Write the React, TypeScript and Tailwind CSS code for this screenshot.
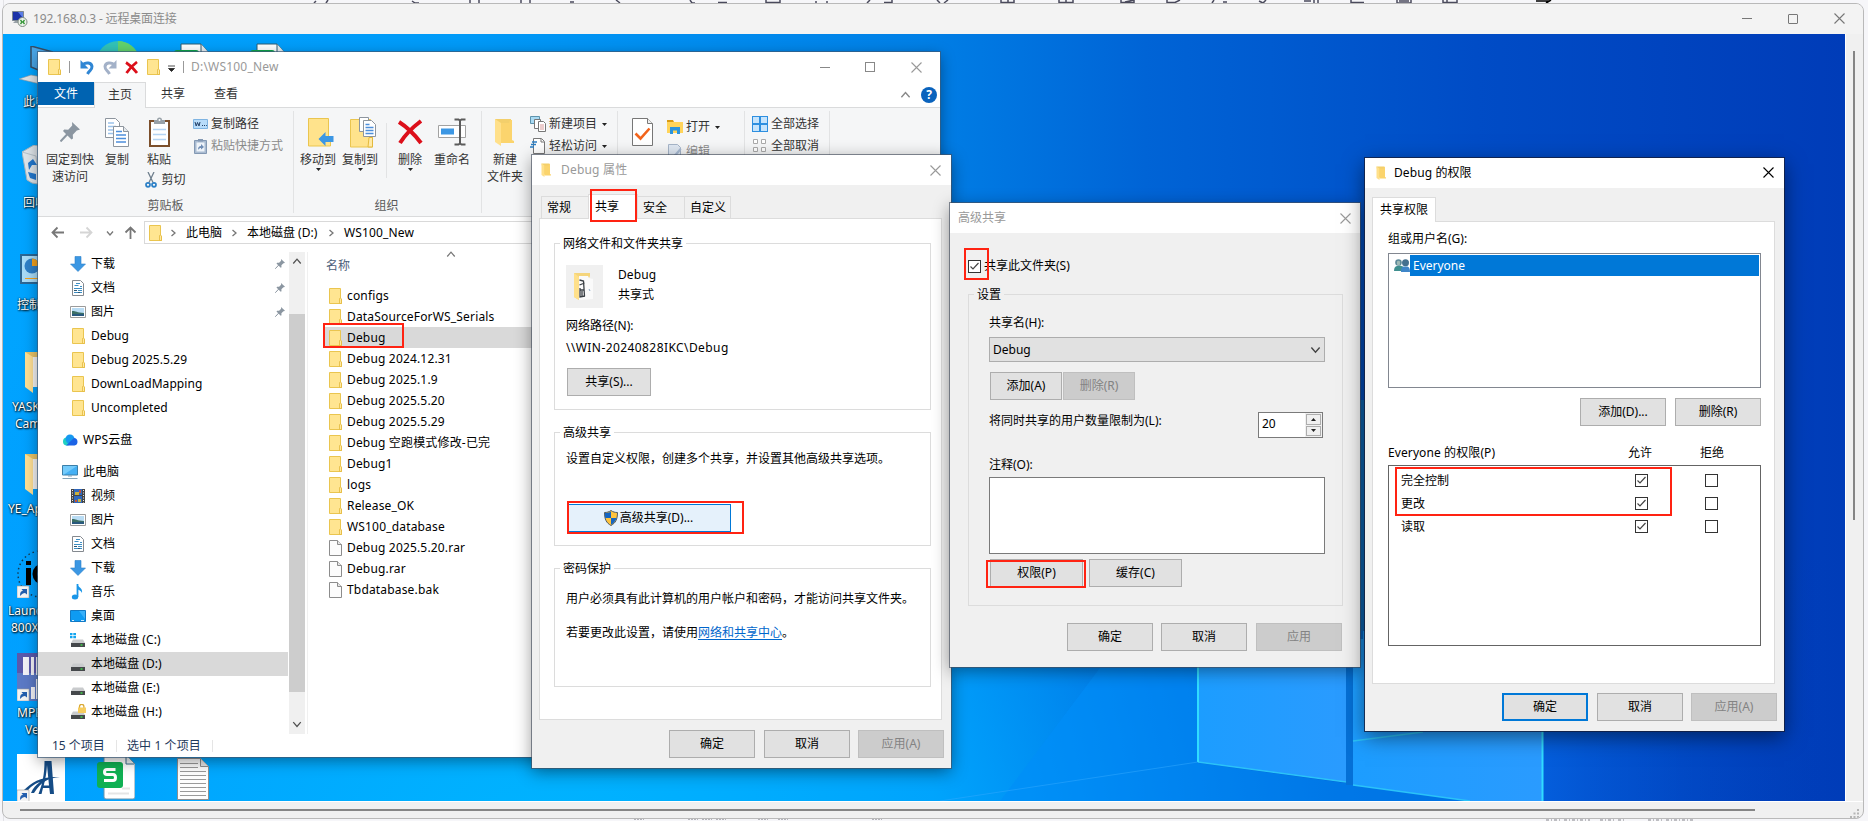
import type { ReactNode } from 'react'

/* ---------- icons ---------- */

function FolderIcon({ w = 13, h = 16 }: { w?: number; h?: number }) {
  return (
    <svg width={w} height={h} viewBox="0 0 13 16" className="shrink-0">
      <path d="M.5.5h11v10l1 1v4H.5z" fill="#ffe591" stroke="#eac54f" />
      <path d="M10.500 15.500v-5l1-.5 1 1v4.500z" fill="#ffe9a2" stroke="#e3b93c" strokeWidth=".8" />
    </svg>
  )
}

function OpenFolderIcon({ w = 11, h = 14 }: { w?: number; h?: number }) {
  return (
    <svg width={w} height={h} viewBox="0 0 20 28" className="shrink-0">
      <path d="M0 1h16v22H4z" fill="#f3cf6b" />
      <path d="M0 1l6 4v23l-6-4z" fill="#ffe08a" />
      <path d="M6 5h8l1-3h2v20l2 1v2H6z" fill="#fbd46d" />
    </svg>
  )
}

function FileIcon() {
  return (
    <svg width="13" height="16" viewBox="0 0 13 16" className="shrink-0">
      <path d="M.5.5h8l4 4v11H.5z" fill="#fcfcfc" stroke="#8c8c8c" />
      <path d="M8.500.5v4h4" fill="#e6e6e6" stroke="#8c8c8c" />
    </svg>
  )
}

function DownloadIcon() {
  return (
    <svg width="16" height="16" viewBox="0 0 16 16">
      <path d="M5 .5h6V8h4.500L8 15.500.5 8H5z" fill="#3b97e3" stroke="#2c80c9" strokeWidth=".6" />
    </svg>
  )
}

function DocIcon() {
  return (
    <svg width="16" height="16" viewBox="0 0 16 16">
      <path d="M2.500.5h8l3 3v12h-11z" fill="#fff" stroke="#84898f" />
      <path d="M6 3.500h4M4.500 5.500h4M10 6.500h2M4 8.500h8M8 10.500h4M4 12.500h8" stroke="#3d8ec4" />
      <path d="M4 10.500h3M8 12.500h2" stroke="#31566f" />
    </svg>
  )
}

function PictureIcon() {
  return (
    <svg width="16" height="16" viewBox="0 0 16 16">
      <path d="M.5 2.500h15v11H.5z" fill="#fff" stroke="#9b9b9b" />
      <path d="M2 4h12v8H2z" fill="#b9dcf4" />
      <path d="M2 7c3-.5 4 1.500 12 2v3H2z" fill="#3c6f66" />
      <path d="M2 10h12v2H2z" fill="#29597e" />
    </svg>
  )
}

function VideoIcon() {
  return (
    <svg width="16" height="16" viewBox="0 0 16 16">
      <path d="M1 1h14v14H1z" fill="#444" />
      <path d="M4 1h8v6H4zM4 8h8v7H4z" fill="#2f68bd" />
      <path d="M5 4h4v3H5zM8 11h3v3H8z" fill="#c9b13d" />
      <path d="M9 2h2v3H9zM5 12h2v2H5z" fill="#c25438" />
      <path d="M2.500 2v13M13.500 2v13" stroke="#eee" strokeDasharray="1 1.500" />
    </svg>
  )
}

function MusicIcon() {
  return (
    <svg width="16" height="16" viewBox="0 0 16 16">
      <path d="M7.500 0v13" stroke="#1a96e8" strokeWidth="1.800" />
      <ellipse cx="5" cy="13" rx="3.200" ry="2.500" fill="#1a96e8" />
      <path d="M7 0c1 3.500 6 3.500 5 9-1-2.500-3-3-5-4z" fill="#1a96e8" />
    </svg>
  )
}

function DesktopIcon() {
  return (
    <svg width="16" height="16" viewBox="0 0 16 16">
      <path d="M.5 2.500h15v11H.5z" fill="#0e9bf3" stroke="#1279c4" />
      <path d="M9 3h6v8z" fill="#37b0fa" />
      <path d="M2 12.500h2M11 12.500h3" stroke="#cfeaff" />
    </svg>
  )
}

function ComputerIcon() {
  return (
    <svg width="16" height="16" viewBox="0 0 16 16">
      <path d="M.5 1.500h15v9.500H.5z" fill="#45b0f4" stroke="#3b7fa9" />
      <path d="M1 2h14L2 10.500H1z" fill="#74cbfb" />
      <path d="M6 12h4M.5 14.500h15" stroke="#84a4b8" />
    </svg>
  )
}

function CloudIcon() {
  return (
    <svg width="16" height="16" viewBox="0 0 16 16">
      <circle cx="5" cy="9.500" r="4" fill="#1fd0c3" />
      <circle cx="8" cy="7" r="4.500" fill="#1698f0" />
      <path d="M4 13.500L12 6a3.800 3.800 0 01.5 7.500z" fill="#1b63e6" />
    </svg>
  )
}

function DriveIcon({ kind }: { kind?: 'system' | 'locked' }) {
  return (
    <svg width="16" height="16" viewBox="0 0 16 16">
      <path d="M3 7.500h10l2 3.500H1z" fill="#c9cbcd" />
      <path d="M1 11h14v4H1z" fill="#45484b" />
      <path d="M10.500 13h2" stroke="#3fe04c" strokeWidth="1.400" />
      {kind === 'system' && (
        <path d="M0 1h2.500v2.200H0zM3.300 1H6v2.200H3.300zM0 4h2.500v2.200H0zM3.300 4H6v2.200H3.300z" fill="#12a5f0" />
      )}
      {kind === 'locked' && (
        <>
          <path d="M9.500 4V2.500a2.200 2.200 0 014.400 0V4" fill="none" stroke="#d9a936" strokeWidth="1.300" />
          <path d="M8 3.500h8V9H8z" fill="#f7cd5e" />
        </>
      )}
    </svg>
  )
}

function PinIcon({ size = 10 }: { size?: number }) {
  return (
    <svg width={size} height={size} viewBox="0 0 20 20" className="shrink-0">
      <path d="M12 0l8 7.500-2.200.8-1 .2-4 4.200.2 3.800-1.500 1L3 9l1.200-1.500 4 .2 4-4.200z" fill="#8b96a1" />
      <path d="M7.500 12L.5 19.500" stroke="#8b96a1" strokeWidth="2" />
    </svg>
  )
}

function RedCross({ size = 13 }: { size?: number }) {
  return (
    <svg width={size} height={size} viewBox="0 0 13 13">
      <path d="M1 1.500C5 4 9 8 12 12M12 1C8 4 4 8 1.500 12" stroke="#dc0f1a" strokeWidth={size > 20 ? 2 : 2.7} fill="none" />
    </svg>
  )
}

function UndoIcon({ flip, color }: { flip?: boolean; color: string }) {
  return (
    <svg width="14" height="15" viewBox="0 0 14 15" className={flip ? '-scale-x-100' : ''}>
      <path d="M3 4.500c3-2.500 8.500-2 9 2 .3 3-2.500 4-4.500 7.500" fill="none" stroke={color} strokeWidth="3" />
      <path d="M.5 0v8.500h8z" fill={color} />
    </svg>
  )
}

function CloseIcon({ color = '#999' }: { color?: string }) {
  return (
    <svg width="11" height="11" viewBox="0 0 11 11">
      <path d="M.5.5l10 10M10.500.5l-10 10" stroke={color} strokeWidth="1.100" />
    </svg>
  )
}

function Caret() {
  return (
    <svg width="5" height="3" viewBox="0 0 5 3" className="shrink-0">
      <path d="M0 0h5L2.500 3z" fill="#222" />
    </svg>
  )
}

function Chevron({ d, w = 8, color = '#777' }: { d: 'up' | 'down' | 'right'; w?: number; color?: string }) {
  const path = { up: 'M1 6l3-3.500L7 6', down: 'M1 2.500L4 6l3-3.500', right: 'M2.500 1L6 4 2.500 7' }[d]
  return (
    <svg width={w} height={w} viewBox="0 0 8 8" className="shrink-0">
      <path d={path} fill="none" stroke={color} strokeWidth={w > 8 ? 1 : 1.3} />
    </svg>
  )
}

function NavArrow({ dir, color }: { dir: 'left' | 'right' | 'up'; color: string }) {
  const d = {
    left: 'M13 6.500H1.500M6.500 1.500l-5 5 5 5',
    right: 'M0 6.500h11.500M6.500 1.500l5 5-5 5',
    up: 'M6.500 13V1.500M1.500 6.500l5-5 5 5',
  }[dir]
  return (
    <svg width="13" height="13" viewBox="0 0 13 13" className="shrink-0">
      <path d={d} fill="none" stroke={color} strokeWidth="1.800" />
    </svg>
  )
}

function CopyIcon() {
  return (
    <svg width="24" height="29" viewBox="0 0 24 29">
      <path d="M.5.500h10l4 4v15H.5z" fill="#fff" stroke="#8d959e" />
      <path d="M3 5h6M3 8.500h8M3 12h8M3 15.500h8" stroke="#9cc2ea" strokeWidth="1.300" />
      <path d="M8.500 8.500h10l5 5v15h-15z" fill="#fff" stroke="#8d959e" />
      <path d="M18.500 8.500v5h5" fill="#e4e8ec" stroke="#8d959e" />
      <path d="M11 13.500h6M11 17h10M11 20.500h10M11 24h10" stroke="#4d8fdb" strokeWidth="1.500" />
    </svg>
  )
}

function PasteIcon() {
  return (
    <svg width="21" height="30" viewBox="0 0 21 30">
      <rect x="1" y="4" width="19" height="25" fill="#fff" stroke="#7c4f2b" strokeWidth="2" />
      <path d="M4 12.500h13M4 17.500h13M4 22.500h13" stroke="#b4d4f3" strokeWidth="1.500" />
      <path d="M5 3h3a2.500 2.500 0 015 0h3v4H5z" fill="#98a1a8" />
      <circle cx="10.500" cy="3" r="1" fill="#fff" />
    </svg>
  )
}

function ScissorsIcon() {
  return (
    <svg width="12" height="16" viewBox="0 0 12 16">
      <path d="M3 0l5 10.500M9 0L4 10.500" stroke="#6f7f8d" strokeWidth="1.300" />
      <circle cx="3" cy="12.800" r="2" fill="none" stroke="#2b7fc6" strokeWidth="1.700" />
      <circle cx="9" cy="12.800" r="2" fill="none" stroke="#2b7fc6" strokeWidth="1.700" />
    </svg>
  )
}

function PathIcon() {
  return (
    <svg width="15" height="10" viewBox="0 0 15 10">
      <path d="M.5.5h14v9H.5z" fill="#b8dcfa" stroke="#7fb4e2" />
      <path d="M2 3l1.200 4L4.500 3.500 6 7l1-4M9 6.500h1M11 6.500h1M13 6.500h.8" stroke="#223f66" fill="none" />
    </svg>
  )
}

function ShortcutIcon() {
  return (
    <svg width="13" height="15" viewBox="0 0 13 15">
      <path d="M.5 1.500h12v13H.5z" fill="#a9bbd1" stroke="#8398b3" />
      <path d="M2.500 3.500h8v9h-8z" fill="#eef3f9" />
      <path d="M4 11c0-3 1-4 3-4V5l3 3-3 2.500V9C6 9 5 9.500 4 11z" fill="#6f8db5" />
      <path d="M4 0h5v2.500H4z" fill="#8398b3" />
    </svg>
  )
}

function MoveToIcon() {
  return (
    <svg width="27" height="30" viewBox="0 0 27 30" className="translate-x-[3px]">
      <path d="M.5 1.500h20V23h2v6H.5z" fill="#ffe38c" stroke="#eac54f" />
      <path d="M10.500 22l7-7v4h8v6h-8v4z" fill="#3c97e4" />
    </svg>
  )
}

function CopyToIcon() {
  return (
    <svg width="27" height="31" viewBox="0 0 27 31" className="translate-x-[3px]">
      <path d="M.5 2.500h20V20h2v10H.5z" fill="#ffe38c" stroke="#eac54f" />
      <path d="M19 20.500h3.500V30H18z" fill="#ffeaa8" stroke="#e3b93c" />
      <path d="M9.500.5h9v14h-9z" fill="#fff" stroke="#8d959e" />
      <path d="M13.500 3.500h8l4 4v12h-12z" fill="#fff" stroke="#8d959e" />
      <path d="M15.500 7.500h4M15.500 10.500h8M15.500 13.500h8M15.500 16.500h8" stroke="#4d8fdb" strokeWidth="1.300" />
    </svg>
  )
}

function RenameIcon() {
  return (
    <svg width="28" height="28" viewBox="0 0 28 28">
      <path d="M.5 7.500h27v12H.5z" fill="#fff" stroke="#a2a2a2" />
      <path d="M3 10.500h13v6H3z" fill="#3c97e4" />
      <path d="M16.500 1.500h4l1.500 1 1.500-1h4M22 2v24M16.500 26.500h4l1.500-1 1.500 1h4" fill="none" stroke="#5b5b5b" strokeWidth="2" />
    </svg>
  )
}

function NewItemIcon() {
  return (
    <svg width="16" height="16" viewBox="0 0 16 16">
      <path d="M.5.500h9v7h-9z" fill="#a9daf3" stroke="#5d93ad" />
      <path d="M4.500 3.500h6v9h-6z" fill="#fff" stroke="#777" />
      <path d="M8.500 5.500h5l2 2v8h-7z" fill="#fff" stroke="#777" />
      <path d="M10 9h4M10 11h4M10 13h4" stroke="#d99a9a" />
    </svg>
  )
}

function EasyAccessIcon() {
  return (
    <svg width="16" height="16" viewBox="0 0 16 16">
      <path d="M3.500.5h8l3 3v12h-11z" fill="#fff" stroke="#777" />
      <path d="M11 1v3h3" fill="none" stroke="#777" />
      <path d="M2 4h5M1 6.500h5M0 9h4" stroke="#2b7fc6" strokeWidth="1.300" />
    </svg>
  )
}

function PropertiesIcon() {
  return (
    <svg width="21" height="28" viewBox="0 0 21 28">
      <path d="M.5.500h15l5 5v22H.5z" fill="#fff" stroke="#777" />
      <path d="M15.500.5v5h5" fill="#eee" stroke="#777" />
      <path d="M3.500 15.500l5 5 9-10" fill="none" stroke="#f2641c" strokeWidth="2.600" />
    </svg>
  )
}

function OpenIcon() {
  return (
    <svg width="16" height="14" viewBox="0 0 16 14">
      <path d="M0 0h6l1 2h-7z" fill="#d99a12" />
      <path d="M0 2h16v11H0z" fill="#ffd45a" />
      <path d="M3 14V7h10v7h-3v-3.500H6V14z" fill="#2a93dd" />
    </svg>
  )
}

function EditIcon() {
  return (
    <svg width="14" height="16" viewBox="0 0 14 16">
      <path d="M.5.5h9l3 3v12H.5z" fill="#dfe8f3" stroke="#a6b5c9" />
      <path d="M5 12L12 4l1.500 1.500-6.500 8z" fill="#a9bbd4" />
    </svg>
  )
}

function SelectIcon({ filled }: { filled?: boolean }) {
  if (filled) {
    return (
      <svg width="16" height="16" viewBox="0 0 16 16">
        <path d="M0 0h16v16H0z" fill="#2d8fe0" />
        <path d="M1 1h6v6H1zM9 1h6v6H9zM1 9h6v6H1zM9 9h6v6H9z" fill="#c6e4fc" />
      </svg>
    )
  }
  return (
    <svg width="16" height="16" viewBox="0 0 16 16">
      <path d="M1.500 1.500h4v4h-4zM9.500 1.500h4v4h-4zM1.500 9.500h4v4h-4zM9.500 9.500h4v4h-4z" fill="#fff" stroke="#aaa" />
    </svg>
  )
}

function ShieldIcon() {
  return (
    <svg width="14" height="16" viewBox="0 0 14 16" className="shrink-0">
      <path d="M7 .5c2 1.500 4 2 6.500 2 0 7-2 10.500-6.500 13C2.500 13 .5 9.500.5 2.500 3 2.500 5 2 7 .5z" fill="#ffc33c" stroke="#4c5a66" />
      <path d="M7 1.500V8H1.200C1 6.500 1 5 1 3c2.500 0 4-.5 6-1.500zM7 8h5.500c-.8 3-2.500 5-5.500 6.800z" fill="#1464c0" />
    </svg>
  )
}

function UsersIcon() {
  return (
    <svg width="16" height="15" viewBox="0 0 16 15" className="shrink-0">
      <path d="M0 13c0-3 1-4.500 3-5l3-.5 3 1V13z" fill="#3f8f8f" />
      <circle cx="4.500" cy="4.500" r="3.300" fill="#5f8a99" />
      <path d="M7 14c0-3 .5-5 2.500-5.500h4C15.500 9.500 16 11 16 14z" fill="#3f86c9" />
      <circle cx="11.500" cy="4.800" r="3.500" fill="#44708f" />
      <path d="M3 3.500c1-1 2-1 3 0v3c-1 1-2 1-3 0z" fill="#9fb9b5" />
    </svg>
  )
}

/* ---------- shared controls ---------- */

type ButtonProps = { children: ReactNode; disabled?: boolean; className?: string }

function Button({ children, disabled, className = 'w-[86px]' }: ButtonProps) {
  const tone = disabled
    ? 'border-[#bfbfbf] bg-[#cccccc] text-[#838383]'
    : 'border-[#adadad] bg-[#e1e1e1] text-black'
  return (
    <button className={`flex h-7 shrink-0 items-center justify-center border ${tone} ${className}`}>
      {children}
    </button>
  )
}

function Checkbox({ checked }: { checked?: boolean }) {
  return (
    <span className="flex h-[13px] w-[13px] shrink-0 items-center justify-center border border-[#333] bg-white">
      {checked && (
        <svg width="11" height="11" viewBox="0 0 11 11">
          <path d="M1.500 5.500L4 8l5.500-6" fill="none" stroke="#444" strokeWidth="1.200" />
        </svg>
      )}
    </span>
  )
}

function Mark({ className }: { className: string }) {
  return <div className={`absolute z-20 border-2 border-[#ff2312] ${className}`} />
}

function RibbonGroup({ label, children, className }: { label?: string; children: ReactNode; className: string }) {
  return (
    <div className={`flex shrink-0 flex-col border-r border-[#e2e3e4] ${className}`}>
      <div className="flex">{children}</div>
      <div className="mt-auto -mb-px -ml-[5px] text-center text-[#5a5a5a]">{label}</div>
    </div>
  )
}

type BigButtonProps = { icon: ReactNode; label: string[]; caret?: boolean; className: string; children?: ReactNode }

function BigButton({ icon, label, caret, className, children }: BigButtonProps) {
  return (
    <div className={`flex flex-col items-center pt-1.5 whitespace-nowrap ${className}`}>
      <div className="flex h-[30px] items-center">{icon}</div>
      <div className="mt-1 text-center leading-[17px]">
        {label.map(l => (
          <div key={l}>{l}</div>
        ))}
      </div>
      {caret && <Caret />}
      {children}
    </div>
  )
}

function SmallButton({ icon, label, caret, muted }: { icon: ReactNode; label: string; caret?: boolean; muted?: boolean }) {
  return (
    <div className={`flex h-4 items-center gap-[3px] whitespace-nowrap ${muted ? 'text-[#8a8a8a]' : ''}`}>
      <span className="flex w-4 justify-center">{icon}</span>
      {label}
      {caret && (
        <span className="ml-0.5">
          <Caret />
        </span>
      )}
    </div>
  )
}

/* ---------- explorer ---------- */

const quickAccess = [
  { icon: <DownloadIcon />, name: '下载', pinned: true },
  { icon: <DocIcon />, name: '文档', pinned: true },
  { icon: <PictureIcon />, name: '图片', pinned: true },
  { icon: <FolderIcon />, name: 'Debug' },
  { icon: <FolderIcon />, name: 'Debug 2025.5.29' },
  { icon: <FolderIcon />, name: 'DownLoadMapping' },
  { icon: <FolderIcon />, name: 'Uncompleted' },
]

const thisPc = [
  { icon: <VideoIcon />, name: '视频' },
  { icon: <PictureIcon />, name: '图片' },
  { icon: <DocIcon />, name: '文档' },
  { icon: <DownloadIcon />, name: '下载' },
  { icon: <MusicIcon />, name: '音乐' },
  { icon: <DesktopIcon />, name: '桌面' },
  { icon: <DriveIcon kind="system" />, name: '本地磁盘 (C:)' },
  { icon: <DriveIcon />, name: '本地磁盘 (D:)', selected: true },
  { icon: <DriveIcon />, name: '本地磁盘 (E:)' },
  { icon: <DriveIcon kind="locked" />, name: '本地磁盘 (H:)' },
]

const files = [
  'configs',
  'DataSourceForWS_Serials',
  'Debug',
  'Debug 2024.12.31',
  'Debug 2025.1.9',
  'Debug 2025.5.20',
  'Debug 2025.5.29',
  'Debug 空跑模式修改-已完',
  'Debug1',
  'logs',
  'Release_OK',
  'WS100_database',
  'Debug 2025.5.20.rar',
  'Debug.rar',
  'Tbdatabase.bak',
]

type NavRowProps = { icon: ReactNode; name: string; pinned?: boolean; selected?: boolean; root?: boolean }

function NavRow({ icon, name, pinned, selected, root }: NavRowProps) {
  return (
    <div className={`flex h-6 items-center pr-[3px] ${root ? 'pl-6' : 'pl-8'} ${selected ? 'bg-[#d9d9d9]' : ''}`}>
      <span className="flex w-4 justify-center">{icon}</span>
      <span className="ml-[5px] flex-1 tracking-[0.05px]">{name}</span>
      {pinned && <PinIcon />}
    </div>
  )
}

function Explorer() {
  return (
    <div className="absolute top-[18px] left-[35px] flex h-[705px] w-[902px] flex-col bg-white shadow-[0_0_0_1px_rgba(60,90,120,0.7),0_4px_14px_rgba(0,0,0,0.4)]">
      <div className="flex h-[30px] items-center pl-[10px] text-[#999]">
        <FolderIcon />
        <span className="ml-2 h-3 w-px bg-[#999]" />
        <span className="ml-2.5"><UndoIcon color="#2f86d4" /></span>
        <span className="ml-[9px]"><UndoIcon flip color="#a3b1c8" /></span>
        <span className="ml-2"><RedCross /></span>
        <span className="ml-[9px]"><FolderIcon /></span>
        <svg width="7" height="7" viewBox="0 0 7 7" className="ml-2 mt-0.5">
          <path d="M0 1h7M.5 3.500h6l-3 3z" stroke="#222" strokeWidth=".8" fill="#222" />
        </svg>
        <span className="ml-2 h-3 w-px bg-[#999]" />
        <span className="ml-[7px] tracking-[0.2px]">D:\WS100_New</span>
        <span className="ml-auto h-px w-2.5 bg-[#888]" />
        <span className="ml-[35px] h-2.5 w-2.5 border border-[#888]" />
        <span className="mr-[18px] ml-9"><CloseIcon /></span>
      </div>

      <div className="flex h-[26px] border-b border-[#dadbdc] text-[#333]">
        <div className="flex h-[23px] w-14 items-center justify-center bg-[#0063b1] text-white">文件</div>
        <div className="-mb-px flex w-[52px] items-center justify-center border border-b-0 border-[#dadbdc] bg-[#f5f6f7] pb-0.5">主页</div>
        <div className="ml-[15px] leading-6">共享</div>
        <div className="ml-[29px] leading-6">查看</div>
        <div className="mr-[3px] ml-auto flex items-center gap-2.5">
          <Chevron d="up" w={11} color="#888" />
          <span className="flex h-4 w-4 items-center justify-center rounded-full bg-[#0a63bd] text-xs font-bold text-white">?</span>
        </div>
      </div>

      <div className="flex h-[109px] border-b border-[#dadbdc] bg-[#f5f6f7] py-[3px] text-[#333]">
        <RibbonGroup label="剪贴板" className="w-64 pl-[5px]">
          <BigButton className="w-[54px]" icon={<PinIcon size={20} />} label={['固定到快', '速访问']} />
          <BigButton className="w-10" icon={<CopyIcon />} label={['复制']} />
          <BigButton className="w-[44px]" icon={<PasteIcon />} label={['粘贴']}>
            <div className="mt-[3px] ml-3 flex h-[17px] items-center gap-[5px]">
              <ScissorsIcon />
              剪切
            </div>
          </BigButton>
          <div className="ml-[11px] flex flex-col gap-1.5 pt-[5px]">
            <SmallButton icon={<PathIcon />} label="复制路径" />
            <SmallButton icon={<ShortcutIcon />} label="粘贴快捷方式" muted />
          </div>
        </RibbonGroup>
        <RibbonGroup label="组织" className="w-[188px] pl-[3px]">
          <BigButton className="w-[42px]" icon={<MoveToIcon />} label={['移动到']} caret />
          <BigButton className="w-[42px]" icon={<CopyToIcon />} label={['复制到']} caret />
          <div className="mt-3 ml-[5px] h-[55px] w-px bg-[#e2e3e4]" />
          <BigButton className="w-[46px]" icon={<RedCross size={26} />} label={['删除']} caret />
          <BigButton className="w-[38px]" icon={<RenameIcon />} label={['重命名']} />
        </RibbonGroup>
        <RibbonGroup className="w-[136px]">
          <BigButton className="w-[46px]" icon={<OpenFolderIcon w={20} h={28} />} label={['新建', '文件夹']} />
          <div className="ml-0.5 flex flex-col gap-1.5 pt-[5px]">
            <SmallButton icon={<NewItemIcon />} label="新建项目" caret />
            <SmallButton icon={<EasyAccessIcon />} label="轻松访问" caret />
          </div>
        </RibbonGroup>
        <RibbonGroup className="w-[127px]">
          <div className="flex w-[49px] justify-center pt-[7px]"><PropertiesIcon /></div>
          <div className="flex flex-col gap-[9px] pt-2">
            <SmallButton icon={<OpenIcon />} label="打开" caret />
            <SmallButton icon={<EditIcon />} label="编辑" muted />
          </div>
        </RibbonGroup>
        <RibbonGroup className="w-[85px] pl-[7px]">
          <div className="flex flex-col gap-1.5 pt-[5px]">
            <SmallButton icon={<SelectIcon filled />} label="全部选择" />
            <SmallButton icon={<SelectIcon />} label="全部取消" />
          </div>
        </RibbonGroup>
      </div>

      <div className="flex h-[35px] items-start pt-1">
        <div className="flex h-[23px] w-[106px] items-center pl-[13px]">
          <NavArrow dir="left" color="#777" />
          <span className="ml-4"><NavArrow dir="right" color="#d5d5d5" /></span>
          <span className="ml-[13px]"><Chevron d="down" /></span>
          <span className="ml-2.5"><NavArrow dir="up" color="#777" /></span>
        </div>
        <div className="flex h-[23px] flex-1 items-center border border-[#d9d9d9] pl-1 whitespace-nowrap">
          <FolderIcon />
          <span className="ml-[7px]"><Chevron d="right" /></span>
          <span className="ml-[9px] w-[36px]">此电脑</span>
          <span className="ml-2"><Chevron d="right" /></span>
          <span className="ml-[9px] w-[72px]">本地磁盘 (D:)</span>
          <span className="ml-2"><Chevron d="right" /></span>
          <span className="ml-[9px] tracking-[0.15px]">WS100_New</span>
        </div>
      </div>

      <div className="flex h-[482px]">
        <div className="w-[250px]">
          {quickAccess.map(item => (
            <NavRow key={item.name} {...item} />
          ))}
          <div className="my-2"><NavRow root icon={<CloudIcon />} name="WPS云盘" /></div>
          <NavRow root icon={<ComputerIcon />} name="此电脑" />
          {thisPc.map(item => (
            <NavRow key={item.name} {...item} />
          ))}
        </div>
        <div className="ml-px flex w-4 flex-col items-center bg-[#f0f0f0]">
          <div className="flex h-[62px] items-start pt-1"><Chevron d="up" w={10} color="#505050" /></div>
          <div className="h-[378px] w-4 bg-[#cdcdcd]" />
          <div className="mt-auto flex h-[15px] items-start"><Chevron d="down" w={10} color="#505050" /></div>
        </div>
        <div className="relative ml-0.5 flex-1 border-l border-[#f0f0f0]">
          <span className="absolute top-[-3px] left-[138px]"><Chevron d="up" w={10} /></span>
          <div className="h-[33px] pl-[18px] leading-[27px] text-[#4c607a]">名称</div>
          {files.map((name, i) => (
            <div
              key={name}
              className={`ml-4 flex h-[21px] items-center gap-[5px] pl-[5px] tracking-[0.17px] ${name === 'Debug' ? 'bg-[#d9d9d9]' : ''}`}
            >
              {i < 12 ? <FolderIcon /> : <FileIcon />}
              {name}
            </div>
          ))}
          <Mark className="top-[71px] left-[15px] h-[25px] w-[81px]" />
        </div>
      </div>

      <div className="flex h-[23px] items-center pl-3.5 text-[#1e395b]">
        <span className="w-[64px]">15 个项目</span>
        <span className="h-3 w-px bg-[#e5e5e5]" />
        <span className="ml-2.5 w-[85px] tracking-[0.1px]">选中 1 个项目</span>
        <span className="h-3 w-px bg-[#e5e5e5]" />
      </div>
    </div>
  )
}

/* ---------- dialogs ---------- */

const dialogShadow = 'shadow-[0_0_0_1px_rgba(70,80,95,0.65),0_4px_16px_rgba(0,0,0,0.42)]'

type GroupProps = { title: string; children: ReactNode; className: string; legend?: string }

function Group({ title, children, className, legend = '-ml-[6px]' }: GroupProps) {
  return (
    <fieldset className={`min-w-0 border border-[#dcdcdc] ${className}`}>
      <legend className={`px-[3px] leading-4 ${legend}`}>
        <span className="block translate-y-px">{title}</span>
      </legend>
      {children}
    </fieldset>
  )
}

function PropertiesDialog() {
  return (
    <div className={`absolute top-[121px] left-[529px] flex h-[613px] w-[419px] flex-col bg-[#f0f0f0] ${dialogShadow}`}>
      <div className="flex h-[30px] items-center bg-white pr-2.5 pl-[9px] text-[#999]">
        <OpenFolderIcon />
        <span className="ml-[9px] tracking-[0.2px]">Debug 属性</span>
        <span className="ml-auto"><CloseIcon /></span>
      </div>
      <div className="flex h-[33px] items-end pl-[9px]">
        <div className="flex h-[22px] w-[47px] items-center border border-r-0 border-b-0 border-[#dcdcdc] pl-[5px]">常规</div>
        <div className="z-10 -mb-px flex h-[25px] w-[50px] items-center border border-b-0 border-[#dcdcdc] bg-white pb-px pl-1.5">共享</div>
        <div className="flex h-[22px] w-[46px] items-center border border-x-0 border-b-0 border-[#dcdcdc] pl-[5px]">安全</div>
        <div className="flex h-[22px] w-[47px] items-center border border-b-0 border-[#dcdcdc] pl-[5px]">自定义</div>
      </div>
      <div className="ml-[7px] h-[502px] w-[403px] border border-[#dcdcdc] bg-white pt-4 pr-[10px] pl-3.5">
        <Group title="网络文件和文件夹共享" className="h-[175px] px-[11px] pt-3.5">
          <div className="flex">
            <div className="flex h-[43px] w-[37px] items-center justify-center bg-[#f0f0f0]">
              <svg width="23" height="29" viewBox="0 0 23 29">
                <path d="M1 1h16v3L6 28l-5-3z" fill="#f5d57c" />
                <path d="M6 4h9l1 2 4 1v20l-14 1z" fill="#fafafa" />
                <path d="M1 1l5 4v23l-5-3z" fill="#ffe08a" />
                <path d="M6.500 8l4 1 1 15M6.500 13l5-2M7 18h4M7 16v9l5-1M9 19v5" stroke="#3a3f44" strokeWidth="1.300" fill="none" />
                <path d="M16 17l1 2" stroke="#8aa9c4" />
              </svg>
            </div>
            <div className="ml-[15px] leading-5">
              <div className="tracking-[0.1px]">Debug</div>
              <div>共享式</div>
            </div>
          </div>
          <div className="mt-[9px] leading-[18px]">网络路径(N):</div>
          <div className="mt-1 leading-[18px] tracking-[0.42px]">\\WIN-20240828IKC\Debug</div>
          <Button className="mt-[11px] ml-px w-[84px]">共享(S)...</Button>
        </Group>
        <Group title="高级共享" className="mt-3.5 h-[122px] px-[11px] pt-2.5">
          <div className="leading-[18px]">设置自定义权限，创建多个共享，并设置其他高级共享选项。</div>
          <button className="mt-9 ml-0.5 flex h-7 w-[163px] items-center justify-center gap-0.5 border border-[#0078d7] bg-[#e5f1fb] pr-0.5">
            <ShieldIcon />
            高级共享(D)...
          </button>
        </Group>
        <Group title="密码保护" className="mt-3.5 h-[127px] px-[11px] pt-3.5">
          <div className="leading-[18px]">用户必须具有此计算机的用户帐户和密码，才能访问共享文件夹。</div>
          <div className="mt-4 leading-[18px]">
            若要更改此设置，请使用<a className="text-[#0066cc] underline underline-offset-2">网络和共享中心</a>。
          </div>
        </Group>
      </div>
      <div className="mt-2.5 flex justify-end pr-[7px]">
        <Button>确定</Button>
        <Button className="ml-[9px] w-[86px]">取消</Button>
        <Button disabled className="ml-2 w-[86px]">应用(A)</Button>
      </div>
      <Mark className="top-[34px] left-[58px] h-[33px] w-[47px]" />
      <Mark className="top-[346px] left-[35px] h-[33px] w-[177px]" />
    </div>
  )
}

function AdvancedDialog() {
  return (
    <div className={`absolute top-[169px] left-[947px] flex h-[464px] w-[410px] flex-col bg-[#f0f0f0] ${dialogShadow}`}>
      <div className="flex h-[30px] items-center bg-white pr-[9px] pl-2 text-[#999]">
        高级共享
        <span className="ml-auto"><CloseIcon /></span>
      </div>
      <div className="mt-6 ml-[18px] flex h-[18px] items-center gap-[3px]">
        <Checkbox checked />
        共享此文件夹(S)
      </div>
      <Group title="设置" legend="-ml-[15px]" className="mt-[11px] ml-[18px] h-[320px] w-[375px] px-5 pt-3">
        <div className="leading-[18px]">共享名(H):</div>
        <div className="mt-[5px] flex h-[25px] w-[336px] items-center justify-between border border-[#adadad] bg-[#e1e1e1] px-[3px]">
          Debug
          <Chevron d="down" w={11} color="#444" />
        </div>
        <div className="mt-2.5 ml-px flex gap-px">
          <Button className="w-[72px]">添加(A)</Button>
          <Button disabled className="w-[72px]">删除(R)</Button>
        </div>
        <div className="mt-3 flex h-[26px] w-[334px] justify-between">
          <span className="leading-[18px]">将同时共享的用户数量限制为(L):</span>
          <div className="flex w-[65px] border border-[#7a7a7a] bg-white pl-[3px]">
            <span className="leading-[22px]">20</span>
            <div className="ml-auto flex w-[17px] flex-col gap-px bg-[#f0f0f0] p-px">
              <span className="flex flex-1 items-center justify-center border border-[#adadad]">
                <span className="rotate-180"><Caret /></span>
              </span>
              <span className="flex flex-1 items-center justify-center border border-[#adadad]"><Caret /></span>
            </div>
          </div>
        </div>
        <div className="mt-[18px] leading-[18px]">注释(O):</div>
        <div className="mt-[3px] h-[77px] w-[336px] border border-[#7a7a7a] bg-white" />
        <div className="mt-[5px] ml-px flex gap-1.5">
          <Button className="w-[93px]">权限(P)</Button>
          <Button className="w-[93px]">缓存(C)</Button>
        </div>
      </Group>
      <div className="mt-[17px] flex justify-end pr-[18px]">
        <Button>确定</Button>
        <Button className="ml-2 w-[86px]">取消</Button>
        <Button disabled className="ml-[9px] w-[86px]">应用</Button>
      </div>
      <Mark className="top-[45px] left-[14px] h-8 w-[25px]" />
      <Mark className="top-[357px] left-[36px] h-7 w-[100px]" />
    </div>
  )
}

const permissions = ['完全控制', '更改', '读取']

function PermissionsDialog() {
  return (
    <div className="absolute top-[124px] left-[1362px] flex h-[573px] w-[419px] flex-col bg-[#f0f0f0] shadow-[0_0_0_1px_rgba(20,30,60,0.8),0_6px_20px_rgba(0,0,0,0.5)]">
      <div className="flex h-[30px] items-center bg-white pr-2.5 pl-[11px]">
        <OpenFolderIcon />
        <span className="ml-[7px] tracking-[0.1px]">Debug 的权限</span>
        <span className="-mt-0.5 ml-auto"><CloseIcon color="#000" /></span>
      </div>
      <div className="z-10 mt-[9px] -mb-px ml-[7px] flex h-[25px] w-16 items-center justify-center border border-b-0 border-[#dcdcdc] bg-white">
        共享权限
      </div>
      <div className="ml-[7px] h-[463px] w-[403px] border border-[#dcdcdc] bg-white pt-2 pl-[15px]">
        <div className="leading-[18px]">组或用户名(G):</div>
        <div className="mt-[5px] h-[135px] w-[373px] border border-[#828790] p-px">
          <div className="flex items-center pl-1">
            <UsersIcon />
            <span className="h-[21px] flex-1 bg-[#0078d7] pl-[3px] leading-[21px] text-white">Everyone</span>
          </div>
        </div>
        <div className="mt-2.5 flex w-[373px] justify-end gap-[9px]">
          <Button>添加(D)...</Button>
          <Button>删除(R)</Button>
        </div>
        <div className="mt-[18px] flex leading-[18px]">
          <span className="w-60 tracking-[0.1px]">Everyone 的权限(P)</span>
          <span className="w-[72px]">允许</span>
          <span>拒绝</span>
        </div>
        <div className="mt-[3px] h-[181px] w-[373px] border border-[#646464] pt-[3px]">
          {permissions.map(name => (
            <div key={name} className="flex h-[23px] items-center pl-3">
              <span className="w-[234px]">{name}</span>
              <span className="w-[70px]"><Checkbox checked /></span>
              <Checkbox />
            </div>
          ))}
        </div>
      </div>
      <div className="mt-[9px] flex justify-end pr-[7px]">
        <button className="h-7 w-[86px] border-2 border-[#0078d7] bg-[#e1e1e1]">确定</button>
        <Button className="ml-[9px] w-[86px]">取消</Button>
        <Button disabled className="ml-2 w-[86px]">应用(A)</Button>
      </div>
      <Mark className="top-[309px] left-[30px] h-[49px] w-[277px]" />
    </div>
  )
}

/* ---------- desktop ---------- */

function Wallpaper() {
  return (
    <svg width="1842" height="767" viewBox="3 34 1842 767" className="absolute inset-0">
      <defs>
        <linearGradient id="base" x1="0" y1="0" x2="1" y2="0">
          <stop offset="0" stopColor="#00a4ff" />
          <stop offset=".25" stopColor="#009af8" />
          <stop offset=".5" stopColor="#007fe6" />
          <stop offset=".62" stopColor="#0064d6" />
          <stop offset=".8" stopColor="#004cc6" />
          <stop offset="1" stopColor="#003cb8" />
        </linearGradient>
        <radialGradient id="glow" cx="560" cy="900" r="780" gradientUnits="userSpaceOnUse">
          <stop offset="0" stopColor="#00b6ff" />
          <stop offset=".5" stopColor="#00a8ff" stopOpacity=".9" />
          <stop offset="1" stopColor="#0090ff" stopOpacity="0" />
        </radialGradient>
        <linearGradient id="pane" x1="0" y1="0" x2="1" y2="0">
          <stop offset="0" stopColor="#1c9dff" />
          <stop offset="1" stopColor="#2a9bff" />
        </linearGradient>
        <linearGradient id="side" x1="0" y1="0" x2="1" y2="0">
          <stop offset="0" stopColor="#0563e2" />
          <stop offset="1" stopColor="#003cb8" stopOpacity="0" />
        </linearGradient>
      </defs>
      <path d="M3 34h1842v767H3z" fill="url(#base)" />
      <path d="M3 34h1842v767H3z" fill="url(#glow)" />
      <path d="M1543 560h302v241h-302z" fill="url(#side)" opacity=".8" />
      <path d="M1100 668h98v95l148 20 197 18H1000z" fill="#008df8" opacity=".6" />
      <path d="M1198 639h148v143l-148-20z" fill="url(#pane)" />
      <path d="M1353 400h190v401h-73l-117-16z" fill="url(#pane)" />
      <path d="M1353 400h12v231h-12z" fill="#0f70c4" />
      <path d="M1346 400h7v385h-7zM1198 631h165v8h-165z" fill="#0570d6" />
      <path d="M1198 762l148 20M1353 785l117 16M1353 741l70-9" fill="none" stroke="#2bc3f8" strokeWidth="1.500" />
      <path d="M1198 640v122M1542.500 640v161" stroke="#30dcff" strokeWidth="2" />
      <path d="M1198 762L940 801" stroke="#33aaff" opacity=".5" />
    </svg>
  )
}

function ShortcutBadge() {
  return (
    <>
      <path d="M0 36h12v12H0z" fill="#f4f4f4" stroke="#9a9a9a" strokeWidth=".6" />
      <path d="M3 46c0-4 1-5 3-5l-1.500-2H10v5.500L8 43c-2 0-3 1-5 3z" fill="#245fae" />
    </>
  )
}

function DesktopIcons() {
  const label = 'absolute overflow-hidden whitespace-nowrap text-white [text-shadow:1px_1px_2px_#000,0_0_2px_#000]'
  return (
    <>
      <svg width="34" height="42" viewBox="0 0 34 42" className="absolute top-[12px] left-[16px]">
        <path d="M12 0l22 6v24l-22-9z" fill="#4aa6e8" stroke="#374e66" strokeWidth="1.500" />
        <path d="M0 33l12-4 22 4v8z" fill="#dfe3e6" stroke="#8b949c" strokeWidth=".6" />
      </svg>
      <span className={`${label} top-[60px] left-5`}>此电脑</span>

      <svg width="44" height="44" viewBox="0 0 44 44" className="absolute top-[7px] left-[93px]">
        <circle cx="22" cy="22" r="22" fill="#32c3b8" />
        <path d="M22 0a22 22 0 0121 16L22 20z" fill="#62d36c" />
      </svg>
      {['left-[171px]', 'left-[247px]'].map(pos => (
        <svg key={pos} width="38" height="44" viewBox="0 0 38 44" className={`absolute top-[9px] ${pos}`}>
          <path d="M7 1h20l8 9v33H7z" fill="#fff" stroke="#2c5c73" />
          <path d="M27 1v9h8" fill="#e8eef2" stroke="#2c5c73" />
          <rect y="7" width="25" height="26" rx="3" fill="#0fa54a" />
        </svg>
      ))}

      <svg width="34" height="42" viewBox="0 0 34 42" className="absolute top-[111px] left-[19px]">
        <path d="M0 7L12 0l22 5v37l-24-4-5-3z" fill="#dfe5ea" stroke="#a9b5be" />
        <path d="M0 7l14 4 3 30" fill="none" stroke="#b7c2ca" />
        <path d="M6 18l5-4 4 6h-5l-3 5zM6 27l8 2v6l-6-2z" fill="#2277cd" />
      </svg>
      <span className={`${label} top-[161px] left-5`}>回收站</span>

      <svg width="48" height="30" viewBox="0 0 48 30" className="absolute top-[220px] left-[17px]">
        <path d="M1 1h46v28H1z" fill="#a9dcf8" stroke="#2c6795" strokeWidth="2" />
        <circle cx="12" cy="12" r="7.500" fill="#2f80c8" />
        <path d="M12 4.500a7.500 7.500 0 017.500 7.500H12z" fill="#f5a21d" />
        <path d="M5 24.500h20" stroke="#f5a21d" />
      </svg>
      <span className={`${label} top-[263px] left-[14px]`}>控制面板</span>

      {['top-[318px]', 'top-[420px]'].map(pos => (
        <svg key={pos} width="20" height="42" viewBox="0 0 20 42" className={`absolute left-[22px] ${pos}`}>
          <path d="M0 0h20v34H4z" fill="#e9c468" />
          <path d="M8 5h12v30H8z" fill="#f4f4f4" />
          <path d="M0 0l8 5v36l-8-6z" fill="#ffe094" />
        </svg>
      ))}
      <span className={`${label} top-[365px] left-[9px]`}>YASKAWA</span>
      <span className={`${label} top-[382px] left-3`}>Camera</span>
      <span className={`${label} top-[467px] left-[5px]`}>YE_App</span>

      <svg width="48" height="48" viewBox="0 0 48 48" className="absolute top-[516px] left-[14px]">
        <circle cx="24" cy="24" r="23" fill="none" stroke="#16384f" strokeWidth="1.500" strokeDasharray="1.500 3" />
        <path d="M9 18h5v17H9zM9 11h5v4H9z" fill="#000" />
        <circle cx="26" cy="24" r="8" fill="none" stroke="#000" strokeWidth="5" />
        <ShortcutBadge />
      </svg>
      <span className={`${label} top-[569px] left-[5px]`}>Launcher</span>
      <span className={`${label} top-[586px] left-[8px]`}>800XA</span>

      <svg width="48" height="48" viewBox="0 0 48 48" className="absolute top-[619px] left-[14px]">
        <path d="M0 0h48v48H0z" fill="#5a59ac" />
        <path d="M0 20h48v28H0z" fill="#5b8fd6" opacity=".6" />
        <path d="M6 4h6v18H6zM14 4h3v18h-3zM19 4h3v18h-3zM14 34h4v12h-4zM19 26h3v20h-3z" fill="#f2f2f7" />
        <ShortcutBadge />
      </svg>
      <span className={`${label} top-[671px] left-[14px]`}>MPE720</span>
      <span className={`${label} top-[688px] left-[22px]`}>Ver.7</span>

      <svg width="48" height="48" viewBox="0 0 48 48" className="absolute top-[720px] left-[14px]">
        <path d="M0 0h48v48H0z" fill="#fff" />
        <path d="M7 36C15 28 24 22 43 23 31 24 24 28 17 39l-3 0c2-5 5-8 9-11-6 2-11 6-13 10z" fill="#154c86" />
        <path d="M27.500 7h7L37 40h-4l-.7-6H26l-1.500 6h-3c4-10 6-20 6-33zM30 11c-.5 8-1.500 14-3.300 20.500h5.300z" fill="#154c86" fillRule="evenodd" />
        <ShortcutBadge />
      </svg>
      <svg width="38" height="46" viewBox="0 0 38 46" className="absolute top-[720px] left-[94px]">
        <path d="M7 1h22l9 9v33q0 2-2 2H9q-2 0-2-2z" fill="#fff" stroke="#6b93ab" />
        <path d="M29 1v9h8" fill="#eef3f6" stroke="#386d8a" />
        <rect y="8" width="26" height="26" rx="3" fill="#0fb053" />
        <path d="M18.500 15.500H10q-2.500 0-2.500 2.500t2.500 2.500h6q2.500 0 2.500 3t-2.500 3H7" fill="none" stroke="#fff" strokeWidth="3" />
        <path d="M11 39.500h21M25 34.500h8" stroke="#e5e5e5" strokeWidth="2" />
      </svg>
      <svg width="32" height="42" viewBox="0 0 32 42" className="absolute top-[724px] left-[174px]">
        <path d="M.5.500h23l8 8v33H.5z" fill="#fdfdfd" stroke="#8f8f8f" />
        <path d="M23.500.5v8h8" fill="#e6e6e6" stroke="#8f8f8f" />
        <path d="M3 5.500h18M3 9.500h18M3 13.500h26M3 17.500h26M3 21.500h26M3 25.500h26M3 29.500h26M3 33.500h26M3 37.500h26" stroke="#9a9a9a" />
      </svg>
    </>
  )
}

/* icon edges of the page behind, peeking out above and below the window */
const toolbarBits = [
  'M314 3l2-2M326 3l2-3M412 1l3 2h4M470 0v3M479 0v3M521 0v3M530 0v3M570 2h4M616 0l4 3',
  'M690 0l2 3h3M718 2.500h9M766 0v2.500h14V0M816 1v2M827 1v2M870 0l-3 3M884 2.500h8V0',
  'M937 0l3 3M948 0l-4 3M1001 0v2.500h13V0M1008 0v2M1059 0v2.500h14V0M1066 0v2M1121 0v2.500h13V0l-9 2',
  'M1167 0v2.500h8l5-2.500M1214 0l-2 3M1223 2h4M1259 1l4 2 3-3M1304 1h7M1314 0v3M1318 0v3M1351 0v2.500h13',
  'M1397 0v3h14V0M1399 1h10M1443 0v2.500h14V0M1447 0v2',
]
const footerBits = [634, 688, 702, 716, 758, 778, 872]

export default function App() {
  return (
    <div className="relative h-[821px] w-[1868px] overflow-hidden bg-[#f6f6f9] font-['Noto_Sans','Noto_Sans_CJK_SC',sans-serif] text-xs text-black">
      <svg width="1868" height="821" viewBox="0 0 1868 821" className="absolute inset-0">
        {toolbarBits.map(d => (
          <path key={d} d={d} fill="none" stroke="#4a4a5c" strokeWidth="1.500" />
        ))}
        <path d="M1536 1h14M1546 3l5-3" stroke="#000" strokeWidth="1.500" />
        <path d="M3.500 0v821" stroke="#e2e2e6" />
        {footerBits.map(x => (
          <path key={x} d={`M${x} 819.500h10`} stroke="#b5b5bb" strokeDasharray="2 1" />
        ))}
        <path d="M1546 820h14M1564 820h26M1600 820h14M1618 820h8M1648 820h14M1666 820h28" stroke="#85858c" strokeDasharray="3 2 1 2" />
      </svg>

      <div className="absolute top-[3px] left-[2px] flex h-[816px] w-[1862px] flex-col overflow-hidden rounded-lg border border-[#b9b9b9] bg-[#f0f0f0]">
        <div className="flex h-[30px] shrink-0 items-center bg-[#f3f3f3] pr-[18px] pb-px pl-[9px] text-[#8b8b8b]">
          <svg width="16" height="16" viewBox="0 0 16 16">
            <path d="M.5.500h11v9H.5z" fill="#1b32a8" stroke="#7c8791" />
            <path d="M6 1h5v6z" fill="#5b7ee6" />
            <path d="M1 12h6l-1-2H3z" fill="#9aa2a8" />
            <circle cx="10.500" cy="11" r="4.500" fill="#edf3ea" stroke="#7d8a80" />
            <path d="M8.500 9l1.500 2-1.500 2M12.500 9L11 11l1.500 2" fill="none" stroke="#2f9433" strokeWidth="1.300" />
          </svg>
          <span className="ml-[5px] tracking-[-0.15px]">192.168.0.3 - 远程桌面连接</span>
          <span className="ml-auto h-px w-2.5 bg-[#777]" />
          <span className="ml-9 h-2.5 w-2.5 rounded-[1px] border border-[#777]" />
          <span className="ml-9"><CloseIcon color="#777" /></span>
        </div>
        <div className="flex h-[767px] shrink-0">
          <div className="relative h-[767px] w-[1842px] overflow-hidden">
            <Wallpaper />
            <DesktopIcons />
            <Explorer />
            <PropertiesDialog />
            <AdvancedDialog />
            <PermissionsDialog />
          </div>
          <div className="flex-1 border-l border-white pt-[17px] pl-[7px]">
            <div className="h-[469px] w-0.5 bg-[#858585]" />
          </div>
        </div>
        <div className="flex flex-1 justify-between border-t border-white pt-[7px] pl-[17px]">
          <div className="h-0.5 w-[1735px] bg-[#858585]" />
          <svg width="10" height="9" viewBox="0 0 10 9" className="mr-[3px]">
            <path d="M7 0h2v2H7zM3.500 3.500h2v2h-2zM7 3.500h2v2H7zM0 7h2v2H0zM3.500 7h2v2h-2zM7 7h2v2H7z" fill="#b5b5b5" />
          </svg>
        </div>
      </div>
    </div>
  )
}
